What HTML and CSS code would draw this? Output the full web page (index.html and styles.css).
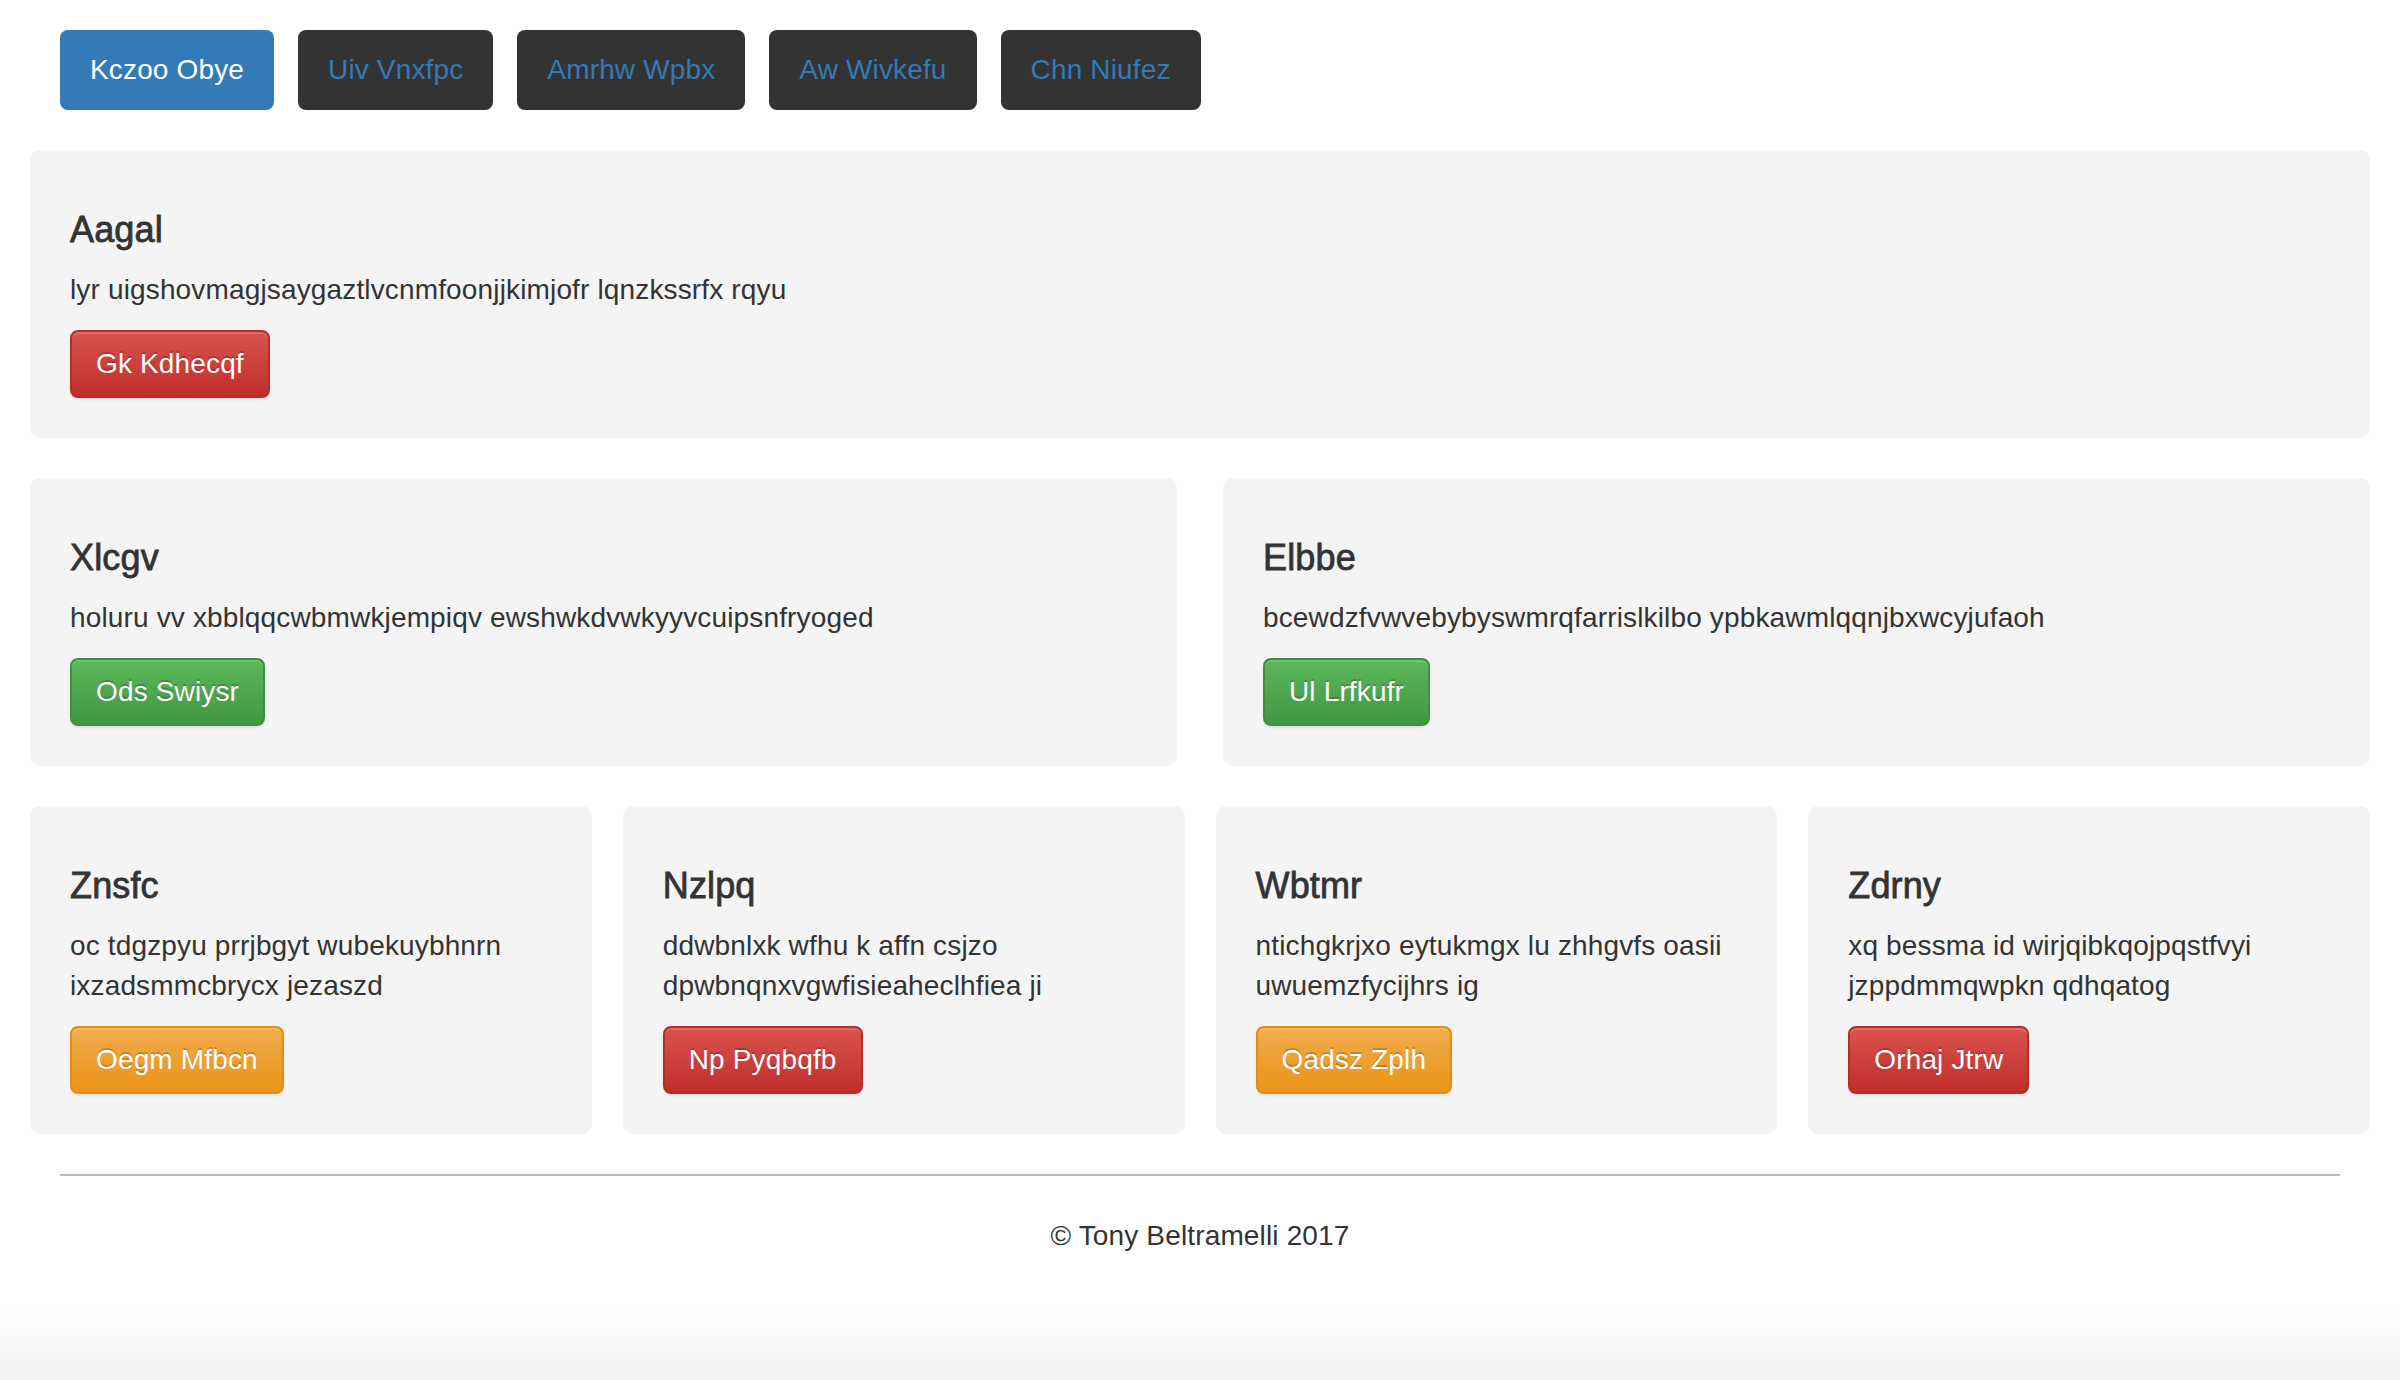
FILE: index.html
```html
<!DOCTYPE html>
<html lang="en">
<head>
<meta charset="utf-8">
<title>Page</title>
<link rel="stylesheet" href="styles.css">
</head>
<body>
<div class="page">
  <nav class="nav">
    <a class="pill active">Kczoo Obye</a>
    <a class="pill">Uiv Vnxfpc</a>
    <a class="pill">Amrhw Wpbx</a>
    <a class="pill">Aw Wivkefu</a>
    <a class="pill">Chn Niufez</a>
  </nav>

  <div class="row row-1">
    <div class="card">
      <h4 class="title">Aagal</h4>
      <p class="text">lyr uigshovmagjsaygaztlvcnmfoonjjkimjofr lqnzkssrfx rqyu</p>
      <a class="btn btn-danger">Gk Kdhecqf</a>
    </div>
  </div>

  <div class="row row-2">
    <div class="card">
      <h4 class="title">Xlcgv</h4>
      <p class="text">holuru vv xbblqqcwbmwkjempiqv ewshwkdvwkyyvcuipsnfryoged</p>
      <a class="btn btn-success">Ods Swiysr</a>
    </div>
    <div class="card">
      <h4 class="title">Elbbe</h4>
      <p class="text">bcewdzfvwvebybyswmrqfarrislkilbo ypbkawmlqqnjbxwcyjufaoh</p>
      <a class="btn btn-success">Ul Lrfkufr</a>
    </div>
  </div>

  <div class="row row-4">
    <div class="card">
      <h4 class="title">Znsfc</h4>
      <p class="text">oc tdgzpyu prrjbgyt wubekuybhnrn ixzadsmmcbrycx jezaszd</p>
      <a class="btn btn-warning">Oegm Mfbcn</a>
    </div>
    <div class="card">
      <h4 class="title">Nzlpq</h4>
      <p class="text">ddwbnlxk wfhu k affn csjzo dpwbnqnxvgwfisieaheclhfiea ji</p>
      <a class="btn btn-danger">Np Pyqbqfb</a>
    </div>
    <div class="card">
      <h4 class="title">Wbtmr</h4>
      <p class="text">ntichgkrjxo eytukmgx lu zhhgvfs oasii uwuemzfycijhrs ig</p>
      <a class="btn btn-warning">Qadsz Zplh</a>
    </div>
    <div class="card">
      <h4 class="title">Zdrny</h4>
      <p class="text">xq bessma id wirjqibkqojpqstfvyi jzppdmmqwpkn qdhqatog</p>
      <a class="btn btn-danger">Orhaj Jtrw</a>
    </div>
  </div>

  <footer class="footer">
    <hr class="rule">
    <p class="copy">&copy; Tony Beltramelli 2017</p>
  </footer>
</div>
</body>
</html>
```

FILE: styles.css
```css
html, body {
  margin: 0;
  padding: 0;
}

body {
  min-height: 100vh;
  font-family: "Liberation Sans", Arial, Helvetica, sans-serif;
  font-size: 28px;
  line-height: 40px;
  letter-spacing: 0.15px;
  color: #333333;
  background: linear-gradient(to bottom, #ffffff 0, #ffffff calc(100% - 75px), #f1f1f1 100%);
}

.page {
  padding: 30px 30px 0 30px;
}

.nav {
  display: flex;
  gap: 24px;
  padding: 0 30px;
  margin-bottom: 40px;
}

.pill {
  display: block;
  padding: 20px 30px;
  line-height: 40px;
  border-radius: 8px;
  background: #333333;
  color: #337ab7;
  text-decoration: none;
}

.pill.active {
  background: #337ab7;
  color: #ffffff;
}

.row {
  display: flex;
}

.row-2 {
  gap: 46px;
}

.row-4 {
  gap: 31px;
}

.card {
  flex: 1 1 0;
  min-width: 0;
  background: #f4f4f4;
  border-radius: 10px;
  padding: 40px;
  margin-bottom: 40px;
}

.title {
  margin: 20px 0 20px 0;
  font-size: 36px;
  line-height: 40px;
  font-weight: 400;
  -webkit-text-stroke: 0.8px #333333;
  color: #333333;
}

.text {
  margin: 0 0 20px 0;
}

.btn {
  display: inline-block;
  padding: 12px 24px;
  line-height: 40px;
  border: 2px solid transparent;
  border-radius: 8px;
  color: #ffffff;
  text-shadow: 0 -2px 0 rgba(0, 0, 0, 0.2);
  box-shadow: inset 0 2px 0 rgba(255, 255, 255, 0.15), 0 2px 2px rgba(0, 0, 0, 0.075);
}

.btn-danger {
  background: linear-gradient(to bottom, #d9534f 0, #c12e2a 100%);
  border-color: #b92c28;
}

.btn-success {
  background: linear-gradient(to bottom, #5cb85c 0, #419641 100%);
  border-color: #3e8f3e;
}

.btn-warning {
  background: linear-gradient(to bottom, #f0ad4e 0, #eb9316 100%);
  border-color: #e38d13;
}

.footer {
  text-align: center;
}

.rule {
  margin: 0 30px;
  border: 0;
  border-top: 2px solid #bbbbbb;
  height: 0;
}

.copy {
  margin: 0;
  padding-top: 40px;
}
```
